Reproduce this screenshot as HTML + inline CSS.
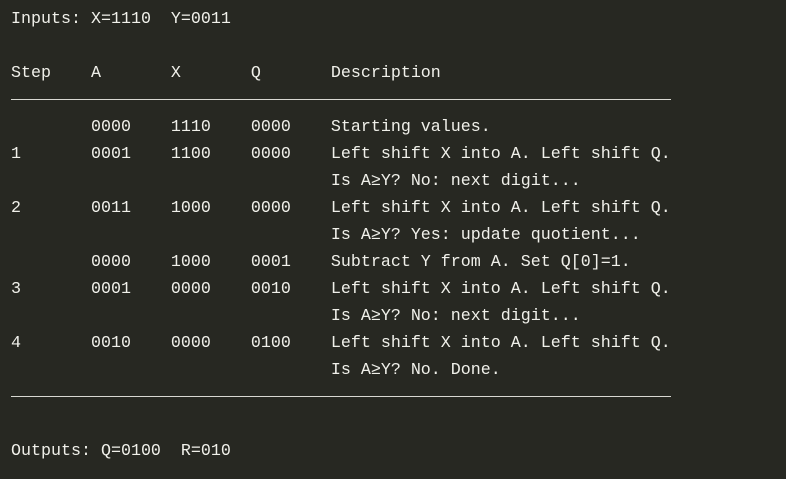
<!DOCTYPE html>
<html><head><meta charset="utf-8"><style>
html,body{margin:0;padding:0;}
body{width:786px;height:479px;background:#272822;position:relative;overflow:hidden;
font-family:"Liberation Mono","DejaVu Sans Mono",monospace;font-size:16.67px;color:#f0f0ea;}
.l{position:absolute;left:11px;white-space:pre;line-height:20px;}
.r{position:absolute;left:11px;width:660px;height:1px;background:#d8d8d2;}
</style></head><body>
<div class="l" style="top:10px">Inputs: X=1110  Y=0011</div>
<div class="l" style="top:64px">Step    A       X       Q       Description</div>
<div class="r" style="top:99px"></div>
<div class="l" style="top:118px">        0000    1110    0000    Starting values.</div>
<div class="l" style="top:145px">1       0001    1100    0000    Left shift X into A. Left shift Q.</div>
<div class="l" style="top:172px">                                Is A≥Y? No: next digit...</div>
<div class="l" style="top:199px">2       0011    1000    0000    Left shift X into A. Left shift Q.</div>
<div class="l" style="top:226px">                                Is A≥Y? Yes: update quotient...</div>
<div class="l" style="top:253px">        0000    1000    0001    Subtract Y from A. Set Q[0]=1.</div>
<div class="l" style="top:280px">3       0001    0000    0010    Left shift X into A. Left shift Q.</div>
<div class="l" style="top:307px">                                Is A≥Y? No: next digit...</div>
<div class="l" style="top:334px">4       0010    0000    0100    Left shift X into A. Left shift Q.</div>
<div class="l" style="top:361px">                                Is A≥Y? No. Done.</div>
<div class="r" style="top:396px"></div>
<div class="l" style="top:442px">Outputs: Q=0100  R=010</div>
</body></html>
